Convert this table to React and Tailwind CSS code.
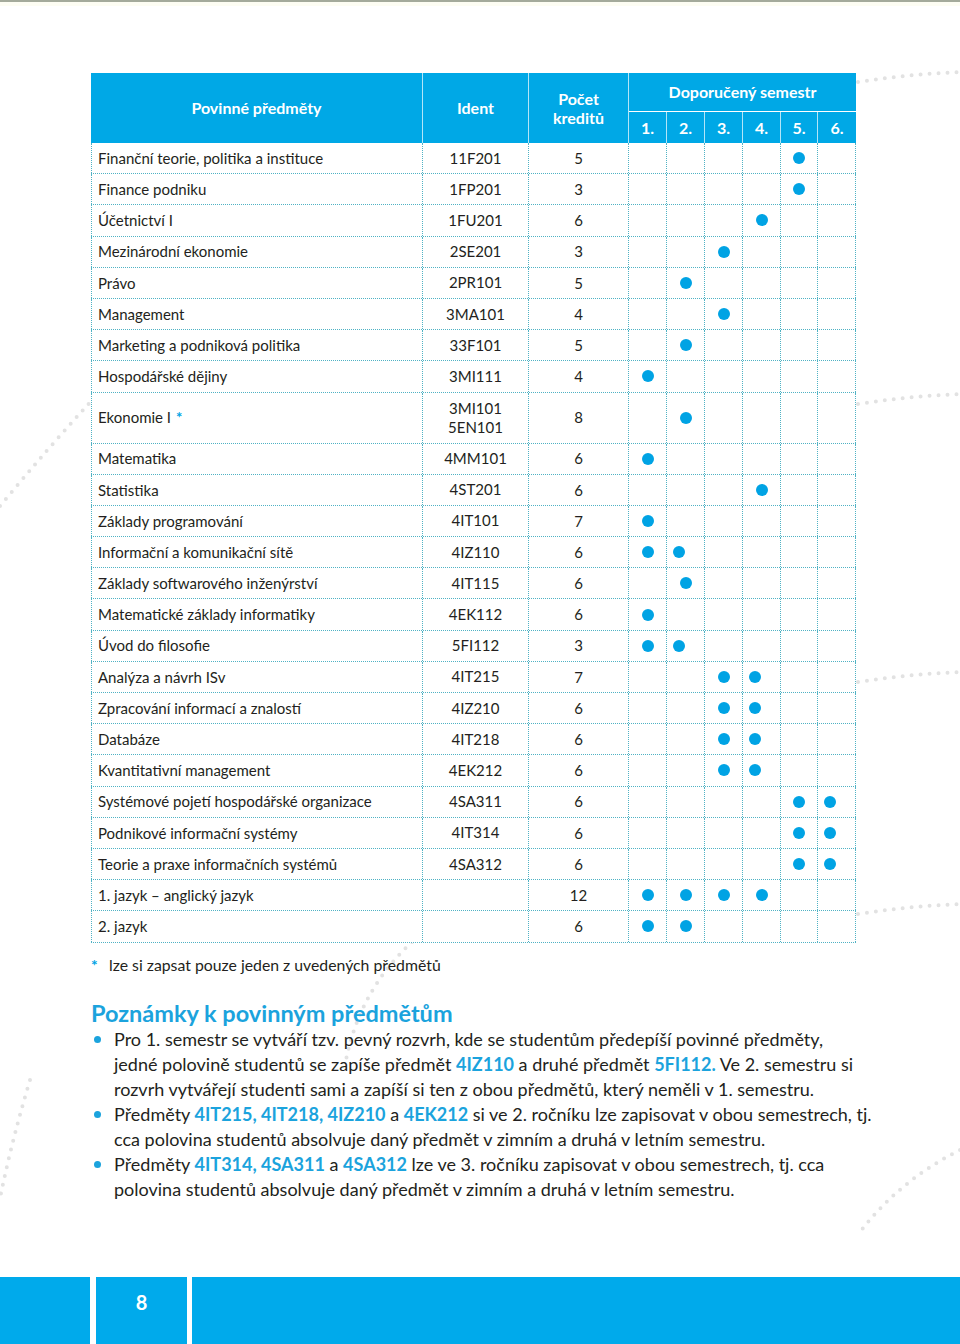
import React from 'react';

const COLS = 'grid grid-cols-[332px_106px_100px_38px_38px_38px_38px_37px_38px]';

const rows = [
  { name: 'Finanční teorie, politika a instituce', ident: '11F201', credits: '5', dots: [5] },
  { name: 'Finance podniku', ident: '1FP201', credits: '3', dots: [5] },
  { name: 'Účetnictví I', ident: '1FU201', credits: '6', dots: [4] },
  { name: 'Mezinárodní ekonomie', ident: '2SE201', credits: '3', dots: [3] },
  { name: 'Právo', ident: '2PR101', credits: '5', dots: [2] },
  { name: 'Management', ident: '3MA101', credits: '4', dots: [3] },
  { name: 'Marketing a podniková politika', ident: '33F101', credits: '5', dots: [2] },
  { name: 'Hospodářské dějiny', ident: '3MI111', credits: '4', dots: [1] },
  { name: 'Ekonomie I', star: true, ident: ['3MI101', '5EN101'], credits: '8', dots: [2], tall: true },
  { name: 'Matematika', ident: '4MM101', credits: '6', dots: [1] },
  { name: 'Statistika', ident: '4ST201', credits: '6', dots: [4] },
  { name: 'Základy programování', ident: '4IT101', credits: '7', dots: [1] },
  { name: 'Informační a komunikační sítě', ident: '4IZ110', credits: '6', dots: [1, 2], pair: true },
  { name: 'Základy softwarového inženýrství', ident: '4IT115', credits: '6', dots: [2] },
  { name: 'Matematické základy informatiky', ident: '4EK112', credits: '6', dots: [1] },
  { name: 'Úvod do filosofie', ident: '5FI112', credits: '3', dots: [1, 2], pair: true },
  { name: 'Analýza a návrh ISv', ident: '4IT215', credits: '7', dots: [3, 4], pair: true },
  { name: 'Zpracování informací a znalostí', ident: '4IZ210', credits: '6', dots: [3, 4], pair: true },
  { name: 'Databáze', ident: '4IT218', credits: '6', dots: [3, 4], pair: true },
  { name: 'Kvantitativní management', ident: '4EK212', credits: '6', dots: [3, 4], pair: true },
  { name: 'Systémové pojetí hospodářské organizace', ident: '4SA311', credits: '6', dots: [5, 6], pair: true },
  { name: 'Podnikové informační systémy', ident: '4IT314', credits: '6', dots: [5, 6], pair: true },
  { name: 'Teorie a praxe informačních systémů', ident: '4SA312', credits: '6', dots: [5, 6], pair: true },
  { name: '1. jazyk – anglický jazyk', ident: '', credits: '12', dots: [1, 2, 3, 4] },
  { name: '2. jazyk', ident: '', credits: '6', dots: [1, 2] },
];

const cell = 'border-r border-dotted border-[#4fb2c4]';

function Dot({ shift }) {
  return (
    <span className={`block w-[12px] h-[12px] rounded-full bg-[#00a3e4] ${shift ? 'translate-x-[-7px]' : ''}`} />
  );
}

function Row({ row }) {
  const height = row.tall ? 'h-[51px]' : 'h-[31.2px]';
  return (
    <div className={`${COLS} ${height} border-b border-dotted border-[#4fb2c4] bg-white`}>
      <div className={`${cell} border-l flex items-center pl-[6px]`}>
        {row.name}
        {row.star ? <span className="ml-[5px] text-[#00a3e4] font-bold">*</span> : null}
      </div>
      <div className={`${cell} flex flex-col items-center justify-center leading-[19px]`}>
        {Array.isArray(row.ident) ? row.ident.map((id) => <span key={id}>{id}</span>) : row.ident}
      </div>
      <div className={`${cell} flex items-center justify-center`}>{row.credits}</div>
      {[1, 2, 3, 4, 5, 6].map((s) => (
        <div key={s} className={`${cell} flex items-center justify-center`}>
          {row.dots.includes(s) ? <Dot shift={row.pair && s === row.dots[1]} /> : null}
        </div>
      ))}
    </div>
  );
}

function Decor() {
  const dot = { stroke: '#e2e2e2', strokeWidth: 4, strokeLinecap: 'round', strokeDasharray: '0 9', fill: 'none' };
  return (
    <svg className="absolute inset-0 pointer-events-none" width="960" height="1344" viewBox="0 0 960 1344">
      <path d="M858 82 Q 910 74 962 72" {...dot} />
      <path d="M858 404 Q 910 396 962 394" {...dot} />
      <path d="M858 682 Q 910 674 962 672" {...dot} />
      <path d="M858 914 Q 910 906 962 904" {...dot} />
      <path d="M0 506 Q 48 448 94 398" {...dot} />
      <path d="M30 1080 Q 12 1140 0 1198" {...dot} />
      <path d="M412 942 Q 360 990 346 1060" {...dot} />
      <path d="M960 1150 Q 900 1180 860 1232" {...dot} />
    </svg>
  );
}

function Hl({ children }) {
  return <span className="font-bold text-[#1ba3dd]">{children}</span>;
}

function Bullet({ children }) {
  return (
    <div className="flex">
      <span className="w-[23px] shrink-0 flex items-center h-[25px] pl-[3px]">
        <span className="block w-[7px] h-[7px] rounded-full bg-[#1ba3dd]" />
      </span>
      <div className="whitespace-nowrap">{children}</div>
    </div>
  );
}

export default function App() {
  return (
    <div className="relative w-[960px] h-[1344px] bg-white overflow-hidden flex flex-col text-[#231f20] font-['Lato','Liberation_Sans',sans-serif]">
      <Decor />
      <div className="h-[2px] bg-[#a4aa9b]" />
      <div className="h-[4px] bg-[#fdfdf3]" />

      <div className="relative ml-[91px] mt-[67px] w-[765px] text-[15px]">
        <div className="grid grid-cols-[332px_106px_100px_227px] h-[70px] bg-[#00a8e6] text-white font-bold text-[16px]">
          <div className="flex items-center justify-center border-r border-white/70">Povinné předměty</div>
          <div className="flex items-center justify-center border-r border-white/70">Ident</div>
          <div className="flex flex-col items-center justify-center border-r border-white/70 leading-[19px]">
            <span>Počet</span>
            <span>kreditů</span>
          </div>
          <div className="flex flex-col">
            <div className="h-[39px] flex items-center justify-center border-b border-white">Doporučený semestr</div>
            <div className="flex-1 grid grid-cols-[38px_38px_38px_38px_37px_38px]">
              {['1.', '2.', '3.', '4.', '5.', '6.'].map((n, i) => (
                <div key={n} className={`flex items-center justify-center ${i < 5 ? 'border-r border-white/70' : ''}`}>
                  {n}
                </div>
              ))}
            </div>
          </div>
        </div>
        {rows.map((row) => (
          <Row key={row.name} row={row} />
        ))}
      </div>

      <div className="relative ml-[91px] mt-[12px] flex items-center h-[20px] text-[15.8px]">
        <span className="w-[18px] text-[#00a3e4] font-bold">*</span>
        <span>lze si zapsat pouze jeden z uvedených předmětů</span>
      </div>

      <h2 className="relative ml-[91px] mt-[24px] h-[28px] leading-[28px] text-[23.5px] font-bold text-[#1ba3dd]">
        Poznámky k povinným předmětům
      </h2>

      <div className="relative ml-[91px] text-[18px] leading-[25px]">
        <Bullet>
          Pro 1. semestr se vytváří tzv. pevný rozvrh, kde se studentům předepíší povinné předměty,
          <br />
          jedné polovině studentů se zapíše předmět <Hl>4IZ110</Hl> a druhé předmět <Hl>5FI112.</Hl> Ve 2. semestru si
          <br />
          rozvrh vytvářejí studenti sami a zapíší si ten z obou předmětů, který neměli v 1. semestru.
        </Bullet>
        <Bullet>
          Předměty <Hl>4IT215, 4IT218, 4IZ210</Hl> a <Hl>4EK212</Hl> si ve 2. ročníku lze zapisovat v obou semestrech, tj.
          <br />
          cca polovina studentů absolvuje daný předmět v zimním a druhá v letním semestru.
        </Bullet>
        <Bullet>
          Předměty <Hl>4IT314, 4SA311</Hl> a <Hl>4SA312</Hl> lze ve 3. ročníku zapisovat v obou semestrech, tj. cca
          <br />
          polovina studentů absolvuje daný předmět v zimním a druhá v letním semestru.
        </Bullet>
      </div>

      <div className="relative mt-auto h-[67px] flex gap-[6px] bg-white">
        <div className="w-[90px] bg-[#00aaeb]" />
        <div className="w-[91px] bg-[#00aaeb] flex justify-center pt-[13px] text-white font-bold text-[20px] leading-[24px]">
          8
        </div>
        <div className="flex-1 bg-[#00aaeb] ml-[-1px]" />
      </div>
    </div>
  );
}
